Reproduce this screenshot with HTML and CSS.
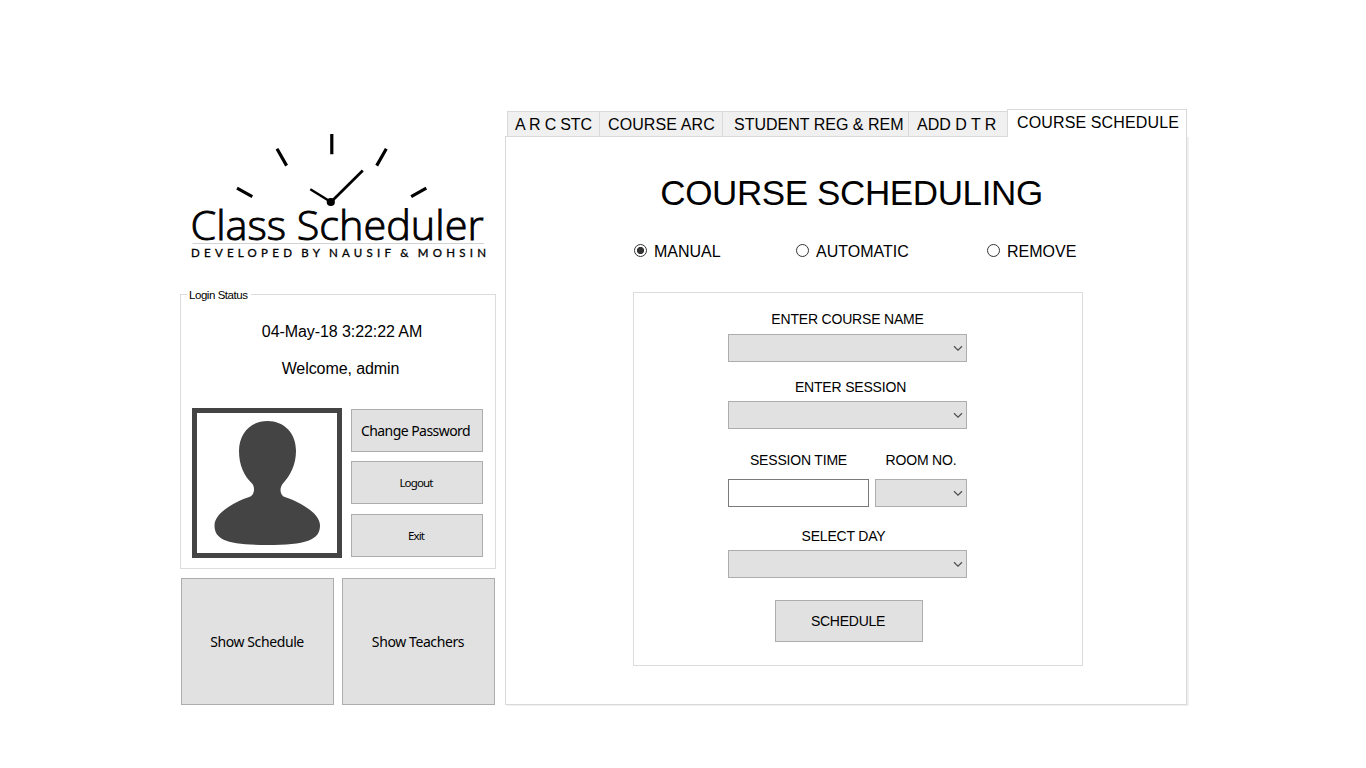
FILE: index.html
```html
<!DOCTYPE html>
<html lang="en">
<head>
<meta charset="utf-8">
<title>Class Scheduler</title>
<link rel="stylesheet" href="styles.css">
</head>
<body>
<div class="app">
  <aside class="side">
    <svg class="logo" viewBox="180 109 316 185" width="316" height="185">
      <g stroke="#000" stroke-width="3.2" fill="none">
        <path d="M331.8 134V154.200M277 148.800L286.600 165.600M386.300 148.800L376.700 165.600M237 188.200L252.300 196.600M426.300 188.200L411.200 196.600"/>
        <path d="M310.300 189.200L331 202" stroke-width="2.500"/>
        <path d="M362.800 170.500L331 202" stroke-width="2.700"/>
      </g>
      <circle cx="330.800" cy="202" r="4.100"/>
      <text class="logo-name" x="190.500" y="239.500" textLength="293" lengthAdjust="spacingAndGlyphs">Class Scheduler</text>
      <path d="M192.500 243.500H484" stroke="#d2d2d2"/>
      <text class="logo-by" x="191" y="256.800" textLength="295">DEVELOPED BY NAUSIF &amp; MOHSIN</text>
    </svg>
    <section class="status">
      <span class="caption">Login Status</span>
      <p class="clock">04-May-18 3:22:22 AM</p>
      <p class="welcome">Welcome, admin</p>
      <div class="account">
        <svg class="avatar" viewBox="0 0 150 150" width="150" height="150">
          <rect x="2.500" y="2.500" width="145" height="145" fill="#fff" stroke="#444" stroke-width="5"/>
          <path fill="#444" d="M75.500 13C92 13 104 25 104 43C104 57 98 68 90.500 76C87.500 80 88 86 91.500 88.500C108 94 128 105 128 117.500C128 132 114 137 75 137C36 137 22.500 132 22.500 117.500C22.500 105 42 94 58.500 88.500C62.500 86 63 80 60.500 76C52 68 47 57 47 43C47 25 59 13 75.500 13Z"/>
        </svg>
        <div class="actions">
          <button class="btn big">Change Password</button>
          <button class="btn small">Logout</button>
          <button class="btn small last">Exit</button>
        </div>
      </div>
    </section>
    <div class="shows">
      <button class="btn show">Show Schedule</button>
      <button class="btn show">Show Teachers</button>
    </div>
  </aside>
  <main class="main">
    <nav class="tabs">
      <span class="tab t1">A R C STC</span>
      <span class="tab t2">COURSE ARC</span>
      <span class="tab t3">STUDENT REG &amp; REM</span>
      <span class="tab t4">ADD D T R</span>
      <span class="tab active">COURSE SCHEDULE</span>
    </nav>
    <section class="panel">
      <h1 class="title">COURSE SCHEDULING</h1>
      <div class="modes">
        <label class="mode manual"><i class="radio on"></i>MANUAL</label>
        <label class="mode auto"><i class="radio"></i>AUTOMATIC</label>
        <label class="mode remove"><i class="radio"></i>REMOVE</label>
      </div>
      <div class="form">
        <div class="label course">ENTER COURSE NAME</div>
        <div class="select"><svg width="10" height="6" viewBox="0 0 10 6"><path d="M1 1.300L5 5.200L9 1.300"/></svg></div>
        <div class="label session">ENTER SESSION</div>
        <div class="select"><svg width="10" height="6" viewBox="0 0 10 6"><path d="M1 1.300L5 5.200L9 1.300"/></svg></div>
        <div class="pair">
          <div class="time">
            <div class="label">SESSION TIME</div>
            <div class="input"></div>
          </div>
          <div class="room">
            <div class="label">ROOM NO.</div>
            <div class="select"><svg width="10" height="6" viewBox="0 0 10 6"><path d="M1 1.300L5 5.200L9 1.300"/></svg></div>
          </div>
        </div>
        <div class="label day">SELECT DAY</div>
        <div class="select"><svg width="10" height="6" viewBox="0 0 10 6"><path d="M1 1.300L5 5.200L9 1.300"/></svg></div>
        <button class="btn schedule">SCHEDULE</button>
      </div>
    </section>
  </main>
</div>
</body>
</html>
```
FILE: styles.css
```css
* { box-sizing: border-box; }
body {
  margin: 0;
  background: #fff;
  color: #000;
  font: 16px/20px "Liberation Sans", Arial, sans-serif;
}
.app {
  display: flex;
  gap: 9px;
  height: 768px;
  padding: 109px 0 0 180px;
  overflow: hidden;
}
.side { width: 316px; }
.logo { display: block; }
.logo-name { font: 300 41px "Open Sans", sans-serif; stroke: #000; stroke-width: .9px; }
.logo-by { font: 400 11.500px Lato, sans-serif; stroke: #000; stroke-width: .3px; word-spacing: -2px; }

.status {
  position: relative;
  height: 275px;
  padding: 27px 11px 0;
  border: 1px solid #dcdcdc;
}
.caption {
  position: absolute;
  top: -9px;
  left: 6px;
  padding: 0 3px 0 2px;
  background: #fff;
  font-size: 11.500px;
  line-height: 18px;
  letter-spacing: -.45px;
}
.clock, .welcome { margin: 0; text-align: center; white-space: nowrap; letter-spacing: -.08px; }
.clock { padding-left: 8px; }
.welcome { margin-top: 17px; padding-left: 5px; }
.account { display: flex; gap: 9px; margin-top: 29px; }
.avatar { display: block; flex: none; }
.actions { width: 132px; padding-top: 1px; }

.btn {
  display: block;
  margin: 0;
  padding: 0;
  border: 1px solid #adadad;
  border-radius: 0;
  background: #e1e1e1;
  color: #000;
  font: 14px/20px "Noto Sans", sans-serif;
  text-align: center;
  white-space: nowrap;
}
.actions .btn { width: 132px; height: 43px; margin-bottom: 9px; }
.actions .small { margin-bottom: 10px; padding-right: 2px; font-size: 11.500px; letter-spacing: -.85px; }
.actions .big { padding-right: 3px; letter-spacing: -.55px; }
.shows { display: flex; gap: 8px; padding: 9px 0 0 1px; }
.show { width: 153px; height: 127px; padding-right: 1px; letter-spacing: -.4px; }

.main { width: 684px; }
.tabs { display: flex; align-items: flex-end; height: 28px; padding-left: 2px; }
.tab {
  height: 26px;
  border: 1px solid #d9d9d9;
  border-right: 0;
  background: #f0f0f0;
  line-height: 25px;
  padding-left: 7px;
  white-space: nowrap;
}
.t1 { width: 92px; letter-spacing: -.15px; }
.t2 { width: 123px; padding-left: 8px; letter-spacing: .1px; }
.t3 { width: 186px; padding-left: 11px; }
.t4 { width: 99px; padding-left: 8px; }
.active {
  position: relative;
  width: 180px;
  height: 28px;
  padding-left: 9px;
  border-right: 1px solid #d9d9d9;
  border-bottom: 0;
  background: #fff;
  letter-spacing: .13px;
}
.panel {
  width: 682px;
  height: 569px;
  margin-top: -1px;
  padding-top: 35px;
  border: 1px solid #d9d9d9;
  box-shadow: 2px 1px 0 #f0f0f0;
}
.title {
  margin: 0;
  padding-left: 11px;
  font-size: 35px;
  line-height: 42px;
  font-weight: 400;
  letter-spacing: -.38px;
  text-align: center;
}
.modes { display: flex; height: 20px; margin: 28px 0 0 128px; }
.mode { display: flex; }
.manual { width: 162px; }
.auto { width: 191px; }
.radio {
  width: 13px;
  height: 13px;
  margin: 2px 7px 0 0;
  border: 1px solid #333;
  border-radius: 50%;
}
.on { background: radial-gradient(circle, #333 3.300px, #fff 3.900px); }
.form {
  width: 450px;
  height: 374px;
  margin: 30px 0 0 127px;
  padding: 16px 115px 0 94px;
  border: 1px solid #dcdcdc;
}
.label {
  font-size: 14px;
  letter-spacing: -.19px;
  text-align: center;
  white-space: nowrap;
}
.select {
  display: flex;
  align-items: center;
  justify-content: flex-end;
  height: 28px;
  padding-right: 3px;
  border: 1px solid #adadad;
  background: #e1e1e1;
}
.select path { fill: none; stroke: #505050; stroke-width: 1.200; }
.course { margin-bottom: 5px; }
.session { margin: 15px 0 4px; padding-left: 6px; }
.pair { display: flex; gap: 6px; margin-top: 21px; }
.pair .label { margin-bottom: 9px; }
.time { width: 141px; }
.room { width: 92px; }
.input { height: 28px; border: 1px solid #7a7a7a; background: #fff; }
.day { margin: 19px 0 4px; padding-right: 8px; }
.schedule {
  width: 148px;
  height: 42px;
  margin: 22px 0 0 47px;
  padding-right: 2px;
  font-family: "Liberation Sans", Arial, sans-serif;
  letter-spacing: -.25px;
}
```
